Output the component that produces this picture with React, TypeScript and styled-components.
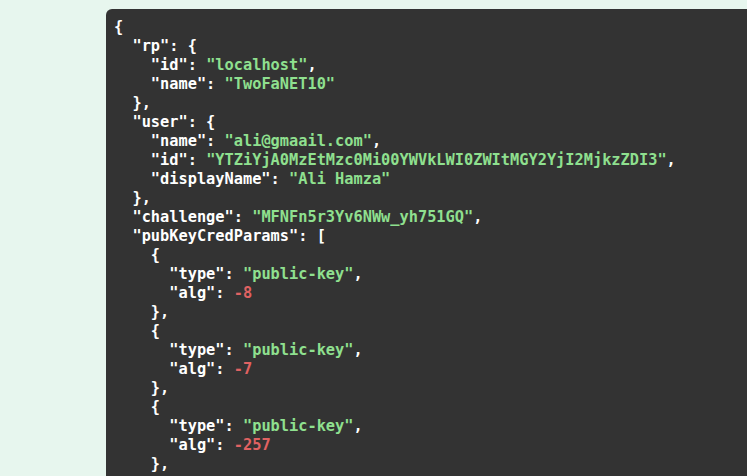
import React from "react";
import styled, { createGlobalStyle } from "styled-components";

const Global = createGlobalStyle`
  html, body {
    margin: 0;
    padding: 0;
    overflow: hidden;
    background: #e7f6ee;
  }
`;

const Page = styled.div`
  width: 747px;
  height: 476px;
  overflow: hidden;
  display: flex;
  align-items: flex-start;
  padding: 9px 0 0 106px;
  box-sizing: border-box;
  background: #e7f6ee;
`;

const CodePanel = styled.pre`
  margin: 0;
  flex: 0 0 auto;
  width: 720px;
  min-height: 520px;
  background: #333333;
  border-radius: 6px;
  padding: 9px 8px;
  box-sizing: border-box;
  font-family: "DejaVu Sans Mono", "Liberation Mono", monospace;
  font-weight: bold;
  font-size: 15.3px;
  line-height: 19px;
  color: #ffffff;
  white-space: pre;
`;

const Key = styled.span`
  color: #ffffff;
`;

const Str = styled.span`
  color: #8fe08f;
`;

const Num = styled.span`
  color: #e06262;
`;

const data = {
  rp: { id: "localhost", name: "TwoFaNET10" },
  user: {
    name: "ali@gmaail.com",
    id: "YTZiYjA0MzEtMzc0Mi00YWVkLWI0ZWItMGY2YjI2MjkzZDI3",
    displayName: "Ali Hamza",
  },
  challenge: "MFNFn5r3Yv6NWw_yh751GQ",
  pubKeyCredParams: [
    { type: "public-key", alg: -8 },
    { type: "public-key", alg: -7 },
    { type: "public-key", alg: -257 },
    { type: "public-key", alg: -37 },
    { type: "public-key", alg: -35 },
  ],
  timeout: 60000,
  attestation: "none",
};

function highlight(src: string): React.ReactNode[] {
  const out: React.ReactNode[] = [];
  const re = /("(?:\\.|[^"\\])*")(\s*:)?|(-?\d+(?:\.\d+)?)/g;
  let last = 0;
  let m: RegExpExecArray | null;
  let k = 0;
  while ((m = re.exec(src))) {
    if (m.index > last) out.push(src.slice(last, m.index));
    if (m[1]) {
      if (m[2]) {
        out.push(<Key key={k++}>{m[1]}</Key>);
        out.push(m[2]);
      } else {
        out.push(<Str key={k++}>{m[1]}</Str>);
      }
    } else if (m[3]) {
      out.push(<Num key={k++}>{m[3]}</Num>);
    }
    last = re.lastIndex;
  }
  if (last < src.length) out.push(src.slice(last));
  return out;
}

export default function App() {
  const json = JSON.stringify(data, null, 2);
  return (
    <>
      <Global />
      <Page>
        <CodePanel>{highlight(json)}</CodePanel>
      </Page>
    </>
  );
}
